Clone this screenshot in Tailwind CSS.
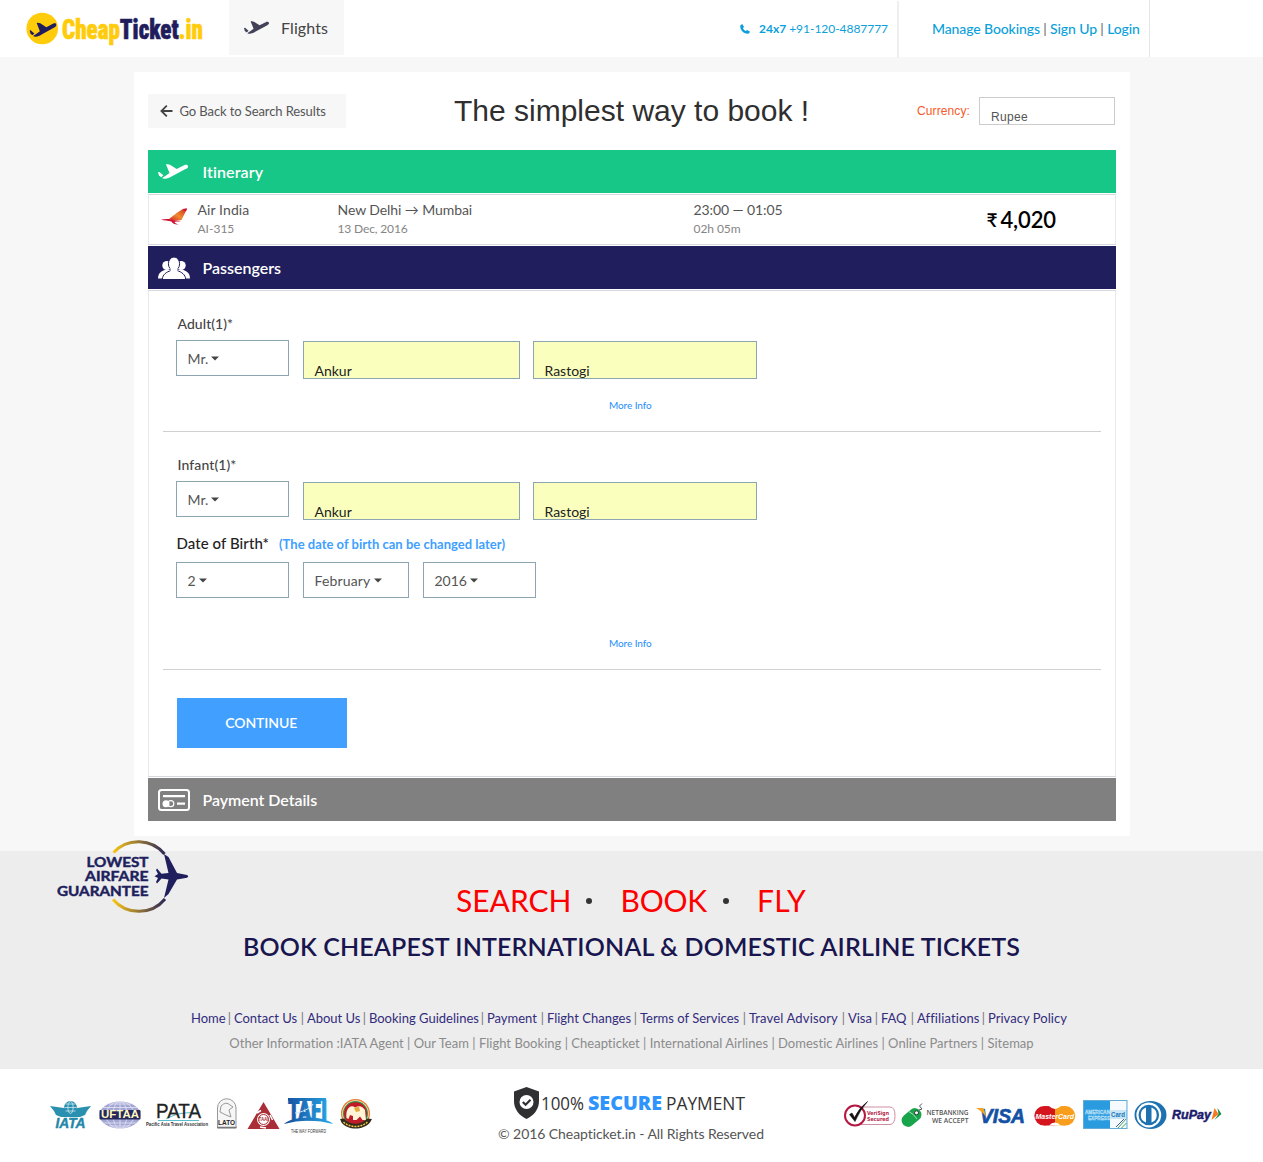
<!DOCTYPE html>
<html lang="en">
<head>
<meta charset="utf-8">
<title>CheapTicket.in</title>
<script src="https://cdn.jsdelivr.net/npm/@tailwindcss/browser@4"></script>
</head>
<body class="bg-white font-[Lato,sans-serif] text-sm text-[#555] [font-variant-ligatures:none]">
<svg class="hidden">
  <symbol id="plane" viewBox="0 0 30 15" preserveAspectRatio="none">
    <path d="M8 .6Q8.500-.2 9.500.2L12 .8L18.700 5L26 1.300C28 .4 29.600.8 30 2.200C30.300 3.600 29 4.300 27.500 5.100L14 12.200C11 14.300 7.500 15.200 4 14.300C5 13.200 6 12.600 7 12.200L11.500 9Z"/>
    <path d="M0 8L1.300 7.900L5.400 11.300L3.200 13.200L1 11.400Z"/>
  </symbol>
  <symbol id="caret" viewBox="0 0 8 4"><path d="M0 0H8L4 4Z"/></symbol>
</svg>

<div class="h-[1069px] bg-[#f7f7f7]">
  <header class="flex h-[57px] items-start bg-white">
    <svg class="ml-[26px] mt-3 h-8 w-[203px] overflow-visible" viewBox="26 12 203 32">
      <circle cx="42.200" cy="28.500" r="15.800" fill="#ffcc0c"/>
      <use href="#plane" x="29.500" y="22.500" width="27" height="14.500" fill="#1f1d5c"/>
      <text x="62" y="39" font-family="Roboto Condensed, sans-serif" font-weight="900" font-size="27" stroke-width=".6" textLength="141" lengthAdjust="spacingAndGlyphs"><tspan fill="#ffcc0c" stroke="#ffcc0c">Cheap</tspan><tspan fill="#1f1d5c" stroke="#1f1d5c">Ticket</tspan><tspan fill="#ffcc0c" stroke="#ffcc0c">.in</tspan></text>
    </svg>
    <div class="flex h-[55px] w-[115px] items-center bg-[#f7f7f7] pl-[15px] text-base text-[#444]">
      <svg class="mr-3 h-[13px] w-[25px] fill-[#434158]"><use href="#plane" width="25" height="13"/></svg>
      <span class="tracking-[0.1px]">Flights</span>
    </div>
    <div class="mt-px ml-auto flex h-[57px] items-center border-r-2 border-[#efefef] pr-[9px] pb-px text-xs text-[#0b9fdb]">
      <svg class="mr-[9px] size-[10px] fill-current" viewBox="0 0 10 10"><path d="M2.500.2L4 3L2.900 4.200C3.600 5.500 4.600 6.500 5.900 7.100L7 6L9.800 7.600C9.900 8.800 9 9.900 7.600 9.800C3.500 9.500.5 6.400.2 2.500C.1 1.100 1.200.1 2.500.2Z"/></svg>
      <b class="mr-[3px]">24x7</b><span class="tracking-[-0.04px]">+91-120-4887777</span>
    </div>
    <div class="mr-[113px] flex h-[57px] w-[251px] items-center border-r border-[#e6e6e6] pl-[33px] font-medium whitespace-nowrap text-[#0b9fdb]">
      <span class="tracking-[-0.115px]">Manage Bookings <span class="font-normal text-[#666]">|</span> Sign Up <span class="font-normal text-[#666]">|</span> Login</span>
    </div>
  </header>

  <main class="mt-[15px] ml-[134px] flex h-[764px] w-[996px] flex-col bg-white px-[14px]">
    <div class="flex h-[78px] items-center">
      <a class="flex h-[34px] w-[198px] items-center bg-[#f7f7f7] pl-3 text-[13px] text-[#555]">
        <svg class="mr-[6.500px] h-3 w-[13px] fill-none stroke-[#444] stroke-[1.800]" viewBox="0 0 13 12"><path d="M12.500 6H1.500M6.800.6L1.400 6L6.800 11.400"/></svg>
        <span class="tracking-[-0.1px]">Go Back to Search Results</span>
      </a>
      <h1 class="ml-[108px] w-[463px] font-['Liberation_Sans',sans-serif] text-[30px] text-[#2f2f2f]">The simplest way to book !</h1>
      <span class="font-['Liberation_Sans',sans-serif] text-xs tracking-[0.1px] text-[#f9592a]">Currency:</span>
      <div class="mr-[1px] ml-auto flex h-7 w-[136px] items-center overflow-hidden border border-[#ccc] pt-[12px] pl-[11px] font-['Liberation_Sans',sans-serif] text-xs tracking-[0.3px] text-[#555]">Rupee</div>
    </div>

    <div class="flex w-[967.500px] flex-col gap-px">
      <h2 class="flex h-[43px] items-center bg-[#17c787] pl-[10px] text-base font-semibold text-white">
        <svg class="mr-[14px] h-[15px] w-[30px] fill-white"><use href="#plane" width="30" height="15"/></svg><span class="ml-[0.500px] tracking-[0.1px]">Itinerary</span>
      </h2>
      <div class="flex h-[51px] border border-x-[#e5eaf0] border-y-[#d5d9de] pt-[5px] leading-[19px]">
        <svg class="mt-[8px] ml-[12px] h-[17px] w-[26px]" viewBox="0 0 26 17">
          <defs><linearGradient id="tail" x1="0" x2="1" y1="1" y2="0"><stop stop-color="#d3202f"/><stop offset=".45" stop-color="#f08a2c"/><stop offset=".75" stop-color="#dd5a27"/><stop offset="1" stop-color="#c8142f"/></linearGradient></defs>
          <path d="M26 .8L20.500 12L12 12.800L8 11L16 4.800L21.500 1.200Z" fill="url(#tail)"/>
          <path d="M21.500 1Q23.500.3 26.200.6L24.800 3.500L22.500 1.800ZM0 11.500C5 10.500 9 10.700 12.500 12.200L20 13C17 13.800 14 13.500 13.500 14C13.500 15 16 16 17.500 16.500C14 16.800 11.500 15.500 10.500 13.500C7 12.500 3 12.600 0 11.500Z" fill="#cf1230"/>
        </svg>
        <div class="ml-[10.500px] w-[140px]"><p class="tracking-[0.1px]">Air India</p><p class="text-xs leading-[19px] text-[#858585]">AI-315</p></div>
        <div class="w-[356px]"><p class="tracking-[-0.08px]">New Delhi → Mumbai</p><p class="text-xs leading-[19px] tracking-[-0.14px] text-[#858585]">13 Dec, 2016</p></div>
        <div class="w-[292px]"><p class="tracking-[-0.09px]">23:00 — 01:05</p><p class="text-xs leading-[19px] tracking-[-0.06px] text-[#858585]">02h 05m</p></div>
        <div class="flex h-[38px] items-center text-[22px] font-semibold tracking-[-0.1px] text-black"><span class="mr-[3px] ml-px text-[19px]">₹</span>4,020</div>
      </div>

      <h2 class="flex h-[43px] items-center bg-[#211e5e] pl-[10px] text-base font-semibold text-white">
        <svg class="mr-[12px] h-[22px] w-[32px] fill-white" viewBox="0 0 32 22">
          <circle cx="8.800" cy="8.500" r="4.500"/><circle cx="23.200" cy="8.500" r="4.500"/>
          <path d="M0 21.500C0 16.500 3 14.200 7.500 12.800H24.500C29 14.200 32 16.500 32 21.500Z"/>
          <g stroke="#211e5e" stroke-width="1"><path d="M4.300 22.500C4.500 17.500 8.500 15 12.800 13.600V10H19.200V13.600C23.500 15 27.500 17.500 27.700 22.500Z"/><ellipse cx="16" cy="6.800" rx="5.600" ry="6.800"/></g>
          <path d="M12.500 11H19.500V15H12.500Z"/>
        </svg><span class="ml-[0.500px]">Passengers</span>
      </h2>
      <div class="flex h-[487px] flex-col border border-x-[#e5eaf0] border-y-[#d5d9de] px-[14px] text-[#555]">
        <section class="border-b border-[#d0d0d0] pt-[23px] pb-[18px]">
          <p class="ml-[14.500px] leading-5 font-medium tracking-[0.05px] text-[#444]">Adult(1)*</p>
          <div class="mt-1.5 ml-[13px] flex items-start">
            <div class="flex h-9 w-[113px] items-center gap-[3px] border border-[#8ca5b1] pt-px pl-[10.500px]">Mr.<svg class="h-[5px] w-2 fill-[#444]"><use href="#caret" width="8" height="5"/></svg></div>
            <div class="mt-px ml-[14px] h-[38px] w-[217px] overflow-hidden border border-[#8ca5b1] bg-[#faffbd] pt-[19px] pl-[10.500px] leading-5 text-[#222]">Ankur</div>
            <div class="mt-px ml-[13px] h-[38px] w-[224px] overflow-hidden border border-[#8ca5b1] bg-[#faffbd] pt-[19px] pl-[10.500px] leading-5 text-[#222]">Rastogi</div>
          </div>
          <p class="mt-[18px] pr-[3px] text-center text-[10px] leading-4 tracking-[-0.08px] text-[#1f8dfb]">More Info</p>
        </section>
        <section class="border-b border-[#d0d0d0] pt-[23px] pb-[18px]">
          <p class="ml-[14.500px] leading-5 font-medium tracking-[0.1px] text-[#444]">Infant(1)*</p>
          <div class="mt-1.5 ml-[13px] flex items-start">
            <div class="flex h-9 w-[113px] items-center gap-[3px] border border-[#8ca5b1] pt-px pl-[10.500px]">Mr.<svg class="h-[5px] w-2 fill-[#444]"><use href="#caret" width="8" height="5"/></svg></div>
            <div class="mt-px ml-[14px] h-[38px] w-[217px] overflow-hidden border border-[#8ca5b1] bg-[#faffbd] pt-[19px] pl-[10.500px] leading-5 text-[#222]">Ankur</div>
            <div class="mt-px ml-[13px] h-[38px] w-[224px] overflow-hidden border border-[#8ca5b1] bg-[#faffbd] pt-[19px] pl-[10.500px] leading-5 text-[#222]">Rastogi</div>
          </div>
          <p class="mt-[13px] ml-[13.500px] flex gap-[10px] text-[15px] leading-5 font-medium tracking-[0.07px] text-[#222]">Date of Birth*<b class="pt-px text-[13px] tracking-[0.015px] text-[#409fff]">(The date of birth can be changed later)</b></p>
          <div class="mt-[8px] ml-[13px] flex gap-[14px]">
            <div class="flex h-9 w-[113px] items-center gap-[3px] border border-[#8ca5b1] pt-px pl-[10.500px]">2<svg class="h-[5px] w-2 fill-[#444]"><use href="#caret" width="8" height="5"/></svg></div>
            <div class="flex h-9 w-[106px] items-center gap-[3px] border border-[#8ca5b1] pt-px pl-[10.500px]"><span class="tracking-[0.16px]">February</span><svg class="h-[5px] w-2 fill-[#444]"><use href="#caret" width="8" height="5"/></svg></div>
            <div class="flex h-9 w-[113px] items-center gap-[3px] border border-[#8ca5b1] pt-px pl-[10.500px]">2016<svg class="h-[5px] w-2 fill-[#444]"><use href="#caret" width="8" height="5"/></svg></div>
          </div>
          <p class="mt-[37px] pr-[3px] text-center text-[10px] leading-4 tracking-[-0.08px] text-[#1f8dfb]">More Info</p>
        </section>
        <button class="mt-7 ml-[14px] h-[50px] w-[169.500px] bg-[#409fff] pr-px font-semibold tracking-[-0.08px] text-white">CONTINUE</button>
      </div>

      <h2 class="flex h-[43px] items-center bg-[#808080] pl-[10px] text-base font-semibold text-white">
        <svg class="mr-[12px] h-[22px] w-[32px] fill-none stroke-white" viewBox="0 0 32 22">
          <rect x="1" y="1" width="30" height="20" rx="2.500" stroke-width="2"/>
          <path d="M5 7.200H27M19 14.700H27" stroke-width="2.200"/>
          <circle cx="8" cy="14.700" r="3.500" fill="#fff" stroke="none"/><circle cx="12.800" cy="14.700" r="3" stroke-width="1.200"/>
        </svg><span class="ml-[0.500px] tracking-[-0.05px]">Payment Details</span>
      </h2>
    </div>
  </main>

  <section class="relative mt-[15px] flex h-[218px] flex-col items-center bg-[#ededed] text-center whitespace-nowrap">
    <svg class="absolute -top-[11px] left-[55px] h-[73px] w-[135px]" viewBox="55 840 135 73">
      <defs><linearGradient id="ring" gradientUnits="userSpaceOnUse" x1="112" x2="166" y1="0" y2="0"><stop stop-color="#fcc914"/><stop offset="1" stop-color="#2a2459"/></linearGradient></defs>
      <g fill="none" stroke="url(#ring)" stroke-width="3"><path d="M113.500 852.500A34 34 0 0 1 164.500 854"/><path d="M113 899.500A34 34 0 0 0 165 899"/></g>
      <path d="M164 854L168.500 857L177 873L187 875Q189.500 876.300 187 877.700L177 879.500L168.500 894L164 898L168.500 879.500L161.500 878.500L157 883.500L156 882L158 878L154.500 876.300L158 874L156 870L157 868.500L161.500 873.800L168.500 873Z" fill="#201e5c"/>
      <text font-family="Lato, sans-serif" font-weight="700" font-size="14" fill="#201e5c" stroke="#201e5c" stroke-width=".45"><tspan x="86.500" y="867" textLength="62" lengthAdjust="spacingAndGlyphs">LOWEST</tspan><tspan x="85" y="881.300" textLength="63.500" lengthAdjust="spacingAndGlyphs">AIRFARE</tspan><tspan x="57" y="895.500" textLength="91.500" lengthAdjust="spacingAndGlyphs">GUARANTEE</tspan></text>
    </svg>
    <p class="mt-[29px] flex h-10 w-[351px] items-center text-[30px] text-[#f00]">
      <span>SEARCH</span><i class="mt-[2px] ml-[15px] size-[6px] rounded-full bg-[#333]"></i><span class="ml-[28px] tracking-[-0.2px]">BOOK</span><i class="mt-[2px] ml-[16px] size-[6px] rounded-full bg-[#333]"></i><span class="ml-[28px] tracking-[0.3px]">FLY</span>
    </p>
    <h3 class="mt-[11px] text-[25px] leading-[30px] font-semibold tracking-[0.12px] text-[#19164f]">BOOK CHEAPEST INTERNATIONAL &amp; DOMESTIC AIRLINE TICKETS</h3>
    <nav class="mt-[47px] mr-[2px] flex text-[13px] leading-5 text-[#777] *:flex *:justify-between *:pr-[3px]">
      <p class="w-[43px]"><a class="text-[#322c7c]">Home</a>|</p>
      <p class="w-[73px]"><a class="text-[#322c7c]">Contact Us</a>|</p>
      <p class="w-[62px]"><a class="text-[#322c7c]">About Us</a>|</p>
      <p class="w-[118px]"><a class="text-[#322c7c]">Booking Guidelines</a>|</p>
      <p class="w-[60px]"><a class="text-[#322c7c]">Payment</a>|</p>
      <p class="w-[93px]"><a class="text-[#322c7c]">Flight Changes</a>|</p>
      <p class="w-[109px]"><a class="text-[#322c7c]">Terms of Services</a>|</p>
      <p class="w-[99px]"><a class="tracking-[0.150px] text-[#322c7c]">Travel Advisory</a>|</p>
      <p class="w-[33px]"><a class="text-[#322c7c]">Visa</a>|</p>
      <p class="w-[36px]"><a class="text-[#322c7c]">FAQ</a>|</p>
      <p class="w-[71px]"><a class="tracking-[0.1px] text-[#322c7c]">Affiliations</a>|</p>
      <a class="tracking-[0.05px] text-[#322c7c]">Privacy Policy</a>
    </nav>
    <p class="mt-[5px] text-[13px] leading-5 tracking-[0.02px] text-[#8b8b8b]">Other Information :IATA Agent | Our Team | Flight Booking | Cheapticket | International Airlines | Domestic Airlines | Online Partners | Sitemap</p>
  </section>
</div>

<footer class="flex h-[93px] items-start bg-white">
  <svg class="mt-[26px] ml-[48px] h-[42px] w-[326px]" viewBox="48 1095 326 42" font-family="Liberation Sans, sans-serif">
    <!-- IATA -->
    <g fill="#2a90b0"><path d="M50 1106L64 1108Q70.500 1117 77 1108L91 1106L87 1111L85 1115L80 1117H61L56 1115L54 1111Z"/><circle cx="70.500" cy="1107.500" r="6.500"/></g>
    <g fill="none" stroke="#cfe9f1" stroke-width=".8"><ellipse cx="70.500" cy="1107.500" rx="2.600" ry="6"/><path d="M64.500 1107.500H76.500M65.500 1104H75.500M65.500 1111H75.500"/></g>
    <text x="55.500" y="1128" font-size="14" font-weight="700" font-style="italic" textLength="30" lengthAdjust="spacingAndGlyphs" fill="#2287a8" stroke="#2287a8" stroke-width=".4">IATA</text>
    <!-- UFTAA -->
    <ellipse cx="120" cy="1115" rx="20.500" ry="13.500" fill="#a3a6d2"/>
    <g fill="none" stroke="#e4e5f5" stroke-width=".8"><ellipse cx="120" cy="1115" rx="7" ry="13.500"/><ellipse cx="120" cy="1115" rx="14" ry="13.500"/><path d="M120 1101.500V1128.500M103 1107.500H137M103 1123H137M109 1104H131M109 1126H131"/></g>
    <rect x="99.500" y="1110" width="41" height="9.500" rx="1" fill="#25285c"/>
    <text x="101" y="1118.300" font-size="10" font-weight="700" textLength="38" lengthAdjust="spacingAndGlyphs" fill="#fff9c4">UFTAA</text>
    <!-- PATA -->
    <path d="M166 1119C176 1113 188 1112 198 1113" stroke="#58bccb" fill="none"/>
    <path d="M158 1120.500H199" stroke="#58bccb"/>
    <text x="156" y="1118" font-size="21" textLength="45" lengthAdjust="spacingAndGlyphs" fill="#222" stroke="#222" stroke-width=".3">PATA</text>
    <text x="146" y="1126" font-size="5" font-weight="700" textLength="62" lengthAdjust="spacingAndGlyphs" fill="#333">Pacific Asia Travel Association</text>
    <!-- LATO -->
    <path d="M217.500 1128V1108A9.200 9.200 0 0 1 236 1108V1128Z" fill="#f6f6f6" stroke="#999" stroke-width="1"/>
    <path d="M221 1106Q226 1101 230 1105L233 1107L229 1110L231 1117L226 1115L220 1112Z" fill="none" stroke="#999"/>
    <text x="218" y="1125" font-size="7.500" font-weight="700" textLength="17" lengthAdjust="spacingAndGlyphs" fill="#222">LATO</text>
    <path d="M217 1127.500H236.500" stroke="#777" stroke-width="1.500"/>
    <!-- TAAI -->
    <path d="M263.500 1102L279.500 1129H247.500Z" fill="#a92e38"/>
    <circle cx="263.500" cy="1119.500" r="6.500" fill="#fff"/><circle cx="263.500" cy="1119.500" r="5" fill="none" stroke="#a92e38"/>
    <path d="M257 1113L261 1110.500M270 1115L272.500 1120M260 1127L266 1128" stroke="#fff" stroke-width="1.500"/>
    <text x="258.500" y="1121.300" font-size="5" font-weight="700" textLength="10" lengthAdjust="spacingAndGlyphs" fill="#a92e38">TAAI</text>
    <!-- TAFI -->
    <defs><linearGradient id="tafi" gradientUnits="userSpaceOnUse" x1="286" x2="330" y1="0" y2="0"><stop stop-color="#1650a0"/><stop offset="1" stop-color="#27a4e4"/></linearGradient></defs>
    <path d="M288 1098H326V1101H288Z" fill="url(#tafi)"/>
    <text x="288" y="1119.500" font-size="28" font-weight="800" font-family="Roboto Condensed, sans-serif" textLength="39" lengthAdjust="spacingAndGlyphs" fill="url(#tafi)" stroke="url(#tafi)">TAFI</text>
    <path d="M284 1124C292 1116 322 1115 333 1124C318 1119.500 299 1119.500 284 1124Z" fill="url(#tafi)"/>
    <path d="M295 1113C300 1113 312 1108 313 1104" fill="none" stroke="#d5e9f8"/>
    <text x="291" y="1133" font-size="6" textLength="35" lengthAdjust="spacingAndGlyphs" fill="#333">THE WAY FORWARD</text>
    <!-- IATO -->
    <circle cx="355.500" cy="1113.500" r="14.500" fill="#e87a2f"/><circle cx="355.500" cy="1113.500" r="13.200" fill="#f6efd0"/><circle cx="355.500" cy="1113.500" r="12.500" fill="#3c8c45"/><circle cx="355.500" cy="1113.500" r="11.300" fill="#bf1a25"/>
    <path d="M346.500 1118Q345.500 1111 349 1107.500Q352 1105 355 1107.500Q361 1104 365 1110L366 1120H362.500L360 1116.500L356.500 1120H353V1116L350 1115L348.500 1119Z" fill="#fff3d8"/>
    <path d="M354 1108L359 1106.500L360 1111L356 1112Z" fill="#e3a83a"/>
    <path d="M340 1119L344 1118.500C349 1125.500 362 1125.500 367 1118.500L372 1119L370 1122.500C363 1130.500 348 1130.500 341.500 1122.500Z" fill="#33291b"/>
    <path d="M343.500 1122C350 1128 361 1128 367.500 1122" stroke="#edc743" fill="none" stroke-dasharray="2 1" stroke-width="1.500"/>
  </svg>

  <div class="mt-[15px] ml-[124px] flex w-[267px] flex-col">
    <svg class="ml-[15px] h-[38px] w-[235px]" viewBox="513 1084 235 38" font-family="Open Sans, sans-serif">
      <path d="M526.500 1087L539 1091.500V1101C539 1109 534 1115.500 526.500 1119C519 1115.500 514 1109 514 1101V1091.500Z" fill="#303033"/>
      <circle cx="526.500" cy="1102" r="7" fill="#fff"/>
      <path d="M522.800 1102L525.600 1104.800L530.500 1099.800" fill="none" stroke="#303033" stroke-width="2.200"/>
      <text x="541" y="1110" font-size="18" textLength="43" lengthAdjust="spacingAndGlyphs" fill="#333">100%</text>
      <text x="588" y="1110" font-size="19.500" font-weight="800" textLength="74" lengthAdjust="spacingAndGlyphs" fill="#2f94fd">SECURE</text>
      <text x="666" y="1110" font-size="18" textLength="79" lengthAdjust="spacingAndGlyphs" fill="#333">PAYMENT</text>
    </svg>
    <p class="mt-[2px] leading-5 tracking-[-0.07px] whitespace-nowrap">© 2016 Cheapticket.in - All Rights Reserved</p>
  </div>

  <svg class="mt-[29px] ml-[77px] h-[34px] w-[382px]" viewBox="842 1098 382 34" font-family="Liberation Sans, sans-serif">
    <!-- VeriSign -->
    <path d="M860 1107H890Q895 1107 895 1115.500T890 1124.500H860Z" fill="#fff" stroke="#cf8fa2"/>
    <circle cx="855" cy="1115.500" r="10" fill="#fff" stroke="#b31942" stroke-width="2"/>
    <path d="M849.500 1114.500L852 1113L854.500 1117.500Q859 1108 867.500 1101.500Q860 1110 855 1121.500Z" fill="#111" stroke="#111" stroke-width=".6"/>
    <g font-family="DejaVu Sans, sans-serif" font-size="5.500" font-weight="700" fill="#b5264b"><text x="867" y="1114.500" textLength="22" lengthAdjust="spacingAndGlyphs">VeriSign</text><text x="867" y="1120.500" textLength="22" lengthAdjust="spacingAndGlyphs">Secured</text></g>
    <!-- Netbanking -->
    <rect x="-11" y="-6.500" width="22" height="13" rx="6.500" fill="#18a44a" transform="translate(911.500 1117.500) rotate(-40)"/>
    <path d="M908 1111Q914 1114 917 1119" stroke="#a5dfb8" fill="none"/>
    <circle cx="916.500" cy="1112.800" r="2" fill="#fff" stroke="#333"/>
    <path d="M919 1110L922 1109L919.500 1106L922 1103.500" fill="none" stroke="#555"/>
    <g font-family="Open Sans, sans-serif" font-size="7.500" fill="#555" font-weight="600"><text x="926.500" y="1114.800" textLength="42" lengthAdjust="spacingAndGlyphs">NETBANKING</text><text x="932" y="1123.300" textLength="36.500" lengthAdjust="spacingAndGlyphs">WE ACCEPT</text></g>
    <!-- Visa -->
    <text x="980" y="1122.500" font-size="20.500" font-weight="700" font-style="italic" textLength="45" lengthAdjust="spacingAndGlyphs" fill="#1451a5" stroke="#1451a5" stroke-width=".7">VISA</text>
    <path d="M976 1108H982Q984.500 1108.500 985 1113L986 1117Q982 1111 976 1108Z" fill="#f5a31b"/>
    <!-- MasterCard -->
    <circle cx="1044" cy="1115.800" r="9.700" fill="#d5151d"/><circle cx="1065.500" cy="1115.800" r="9.700" fill="#f99d1c"/>
    <path d="M1044 1106.100H1055V1125.500H1044Z" fill="#d5151d"/><path d="M1055 1106.100H1065.500V1125.500H1055Z" fill="#f99d1c"/>
    <path d="M1049 1106Q1054.700 1112 1061 1106ZM1049 1125.600Q1054.700 1119.500 1061 1125.600Z" fill="#fff"/>
    <text x="1035.500" y="1118.500" font-size="8" font-weight="700" font-style="italic" textLength="38.500" lengthAdjust="spacingAndGlyphs" fill="#fff">MasterCard</text>
    <!-- American Express -->
    <rect x="1083.500" y="1100.500" width="43.500" height="28" fill="#2b9be0" stroke="#65abd5"/>
    <path d="M1110 1101H1126.500V1110H1110ZM1110 1119H1126.500V1128H1110Z" fill="#f4fafd"/>
    <path d="M1118 1128L1126 1119M1121.500 1128L1126.500 1123" stroke="#49a35b"/><path d="M1116 1127L1124 1119" stroke="#44569b"/>
    <g font-weight="700" font-size="5.500" fill="#7cc2ee" stroke="#d9effb" stroke-width=".3"><text x="1085" y="1113.500" textLength="25" lengthAdjust="spacingAndGlyphs">AMERICAN</text><text x="1088" y="1119.500" textLength="22" lengthAdjust="spacingAndGlyphs">EXPRESS</text></g>
    <rect x="1110" y="1110" width="16.500" height="9" fill="#c9e6f7"/>
    <text x="1111" y="1117" font-size="6.500" font-weight="700" textLength="14" lengthAdjust="spacingAndGlyphs" fill="#1b76b7">Card</text>
    <!-- Diners Club -->
    <ellipse cx="1150.500" cy="1115" rx="16" ry="14" fill="#1d71b0"/><circle cx="1148.800" cy="1115" r="12.400" fill="#fff"/><circle cx="1148.800" cy="1115" r="10.300" fill="#1d71b0"/>
    <path d="M1146 1107.500A8 8 0 0 0 1146 1122.500ZM1151.500 1107.500A8 8 0 0 1 1151.500 1122.500Z" fill="#fff"/>
    <!-- RuPay -->
    <text x="1172" y="1118.500" font-size="13" font-weight="700" font-style="italic" textLength="39" lengthAdjust="spacingAndGlyphs" fill="#1d1b6c" stroke="#1d1b6c" stroke-width=".5">RuPay</text>
    <path d="M1214.500 1108L1218.500 1114L1211.500 1120Z" fill="#f47b20"/><path d="M1217.500 1108L1221.500 1114L1214.500 1120L1218.500 1114Z" fill="#1a8a49"/>
  </svg>
</footer>
</body>
</html>
